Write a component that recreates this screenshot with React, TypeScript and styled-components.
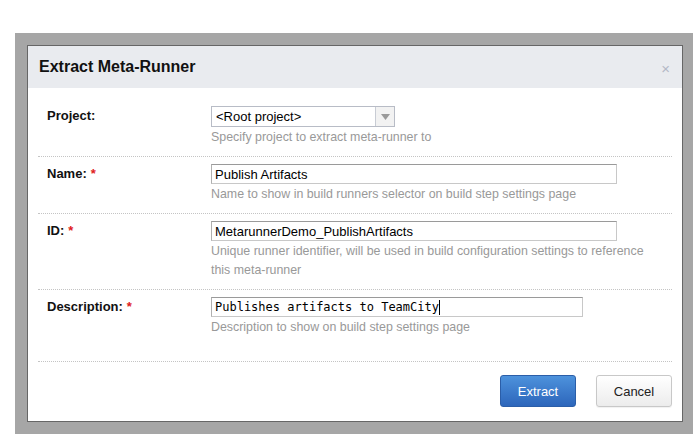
import React from "react";
import styled, { createGlobalStyle } from "styled-components";

const Global = createGlobalStyle`
  html, body { margin: 0; padding: 0; background: #fff; }
  body { font-family: "Liberation Sans", Arial, sans-serif; }
  * { box-sizing: border-box; }
`;

const Page = styled.div`
  padding: 33px 4px 8px 15px;
`;

const Overlay = styled.div`
  width: 678px;
  background: #a6a6a6;
  padding: 12px 10px 12px 12px;
`;

const Dialog = styled.div`
  border: 1px solid #666;
  background: #fff;
`;

const Header = styled.div`
  height: 42px;
  background: #e9ebef;
  display: flex;
  align-items: center;
  justify-content: space-between;
  padding: 0 12px 0 11px;
`;

const Title = styled.h2`
  margin: 0;
  font-size: 16px;
  font-weight: bold;
  color: #111;
  font-family: "Liberation Sans", Arial, sans-serif;
`;

const Close = styled.span`
  color: #b3b8c6;
  font-size: 15px;
  line-height: 1;
  margin-top: 2px;
`;

const Body = styled.div`
  padding: 11px 10px 0 10px;
`;

const Row = styled.div<{ $bottom?: number }>`
  display: grid;
  grid-template-columns: 164px 1fr;
  padding: 7px 0 ${(p) => p.$bottom ?? 9}px 9px;
  border-bottom: 1px dotted #c4c4c4;
`;

const Label = styled.label`
  font-size: 13px;
  font-weight: bold;
  color: #111;
  line-height: 20px;
`;

const Req = styled.span`
  color: #e02020;
  font-weight: bold;
  margin-left: 4px;
`;

const Field = styled.div`
  display: flex;
  flex-direction: column;
  align-items: flex-start;
`;

const Input = styled.div<{ $width: number; $mono?: boolean }>`
  width: ${(p) => p.$width}px;
  height: 20px;
  border: 1px solid #c8c8c8;
  border-top-color: #9a9a9a;
  border-left-color: #b0b0b0;
  padding: 0 3px;
  display: flex;
  align-items: center;
  font-family: ${(p) =>
    p.$mono ? '"DejaVu Sans Mono", "Liberation Mono", monospace' : '"Liberation Sans", Arial, sans-serif'};
  font-size: ${(p) => (p.$mono ? 12 : 13)}px;
  color: #000;
  white-space: pre;
`;

const Caret = styled.span`
  display: inline-block;
  width: 1px;
  height: 15px;
  background: #000;
`;

const Select = styled.div`
  width: 184px;
  height: 21px;
  border: 1px solid #b8bcc6;
  display: flex;
  font-size: 13px;
  color: #000;
`;

const SelectValue = styled.div`
  flex: 1;
  padding: 0 4px;
  display: flex;
  align-items: center;
`;

const SelectArrow = styled.div`
  width: 19px;
  border-left: 1px solid #c8ccd4;
  background: #f2f2f2;
  display: flex;
  align-items: center;
  justify-content: center;
`;

const Help = styled.div`
  font-size: 12.4px;
  color: #999;
  line-height: 19px;
  margin-top: 1px;
`;

const Footer = styled.div`
  display: flex;
  justify-content: flex-end;
  gap: 20px;
  padding: 13px 0 14px;
`;

const Button = styled.button<{ $primary?: boolean }>`
  width: 76px;
  height: 32px;
  border-radius: 3px;
  font-family: "Liberation Sans", Arial, sans-serif;
  font-size: 13px;
  cursor: pointer;
  border: 1px solid ${(p) => (p.$primary ? "#2b5ea8" : "#c8c8c8")};
  color: ${(p) => (p.$primary ? "#fff" : "#222")};
  background: ${(p) =>
    p.$primary
      ? "linear-gradient(#4d92dc, #2d66bb)"
      : "linear-gradient(#ffffff, #ececec)"};
  box-shadow: ${(p) => (p.$primary ? "none" : "0 1px 1px rgba(0,0,0,0.06)")};
`;

export default function App() {
  return (
    <>
      <Global />
      <Page>
        <Overlay>
          <Dialog>
            <Header>
              <Title>Extract Meta-Runner</Title>
              <Close>×</Close>
            </Header>
            <Body>
              <Row>
                <Label>Project:</Label>
                <Field>
                  <Select>
                    <SelectValue>&lt;Root project&gt;</SelectValue>
                    <SelectArrow>
                      <svg width="9" height="6" viewBox="0 0 9 6">
                        <path d="M0 0 H9 L4.5 6 Z" fill="#9a9a9a" />
                      </svg>
                    </SelectArrow>
                  </Select>
                  <Help>Specify project to extract meta-runner to</Help>
                </Field>
              </Row>
              <Row>
                <Label>
                  Name:<Req>*</Req>
                </Label>
                <Field>
                  <Input $width={406}>Publish Artifacts</Input>
                  <Help>Name to show in build runners selector on build step settings page</Help>
                </Field>
              </Row>
              <Row>
                <Label>
                  ID:<Req>*</Req>
                </Label>
                <Field>
                  <Input $width={406}>MetarunnerDemo_PublishArtifacts</Input>
                  <Help>
                    Unique runner identifier, will be used in build configuration settings to reference
                    <br />
                    this meta-runner
                  </Help>
                </Field>
              </Row>
              <Row $bottom={24}>
                <Label>
                  Description:<Req>*</Req>
                </Label>
                <Field>
                  <Input $width={372} $mono>
                    Publishes artifacts to TeamCity
                    <Caret />
                  </Input>
                  <Help>Description to show on build step settings page</Help>
                </Field>
              </Row>
              <Footer>
                <Button $primary>Extract</Button>
                <Button>Cancel</Button>
              </Footer>
            </Body>
          </Dialog>
        </Overlay>
      </Page>
    </>
  );
}
